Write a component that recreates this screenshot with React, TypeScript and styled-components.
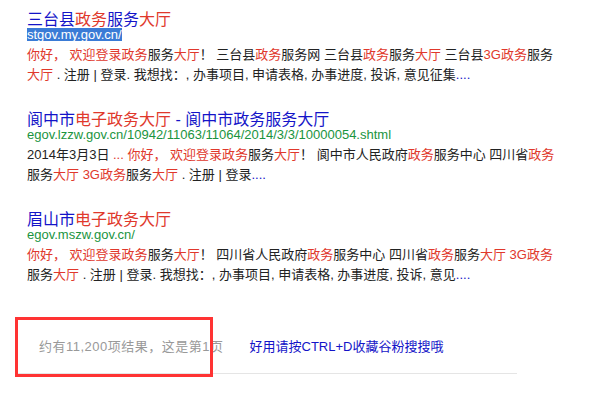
import React from 'react';
import styled, { createGlobalStyle } from 'styled-components';

type Part = [string, 'n' | 'r' | 'b'];

interface Result {
  title: Part[];
  url: string;
  selected?: boolean;
  snippet: Part[];
}

const results: Result[] = [
  {
    title: [
      ['三台县', 'b'],
      ['政务', 'r'],
      ['服务', 'b'],
      ['大厅', 'r'],
    ],
    url: 'stgov.my.gov.cn/',
    selected: true,
    snippet: [
      ['你好， 欢迎登录政务', 'r'],
      ['服务', 'n'],
      ['大厅', 'r'],
      ['！ 三台县', 'n'],
      ['政务', 'r'],
      ['服务网 三台县', 'n'],
      ['政务', 'r'],
      ['服务', 'n'],
      ['大厅', 'r'],
      [' 三台县', 'n'],
      ['3G政务', 'r'],
      ['服务', 'n'],
      ['大厅', 'r'],
      [' . 注册 | 登录. 我想找：, 办事项目, 申请表格, 办事进度, 投诉, 意见征集', 'n'],
      ['....', 'b'],
    ],
  },
  {
    title: [
      ['阆中市', 'b'],
      ['电子政务大厅', 'r'],
      [' - 阆中市政务服务大厅', 'b'],
    ],
    url: 'egov.lzzw.gov.cn/10942/11063/11064/2014/3/3/10000054.shtml',
    snippet: [
      ['2014年3月3日 ', 'n'],
      ['... 你好， 欢迎登录政务', 'r'],
      ['服务', 'n'],
      ['大厅', 'r'],
      ['！ 阆中市人民政府', 'n'],
      ['政务', 'r'],
      ['服务中心 四川省', 'n'],
      ['政务', 'r'],
      ['服务', 'n'],
      ['大厅', 'r'],
      [' 3G政务', 'r'],
      ['服务', 'n'],
      ['大厅', 'r'],
      [' . 注册 | 登录', 'n'],
      ['....', 'b'],
    ],
  },
  {
    title: [
      ['眉山市', 'b'],
      ['电子政务大厅', 'r'],
    ],
    url: 'egov.mszw.gov.cn/',
    snippet: [
      ['你好， 欢迎登录政务', 'r'],
      ['服务', 'n'],
      ['大厅', 'r'],
      ['！ 四川省人民政府', 'n'],
      ['政务', 'r'],
      ['服务中心 四川省', 'n'],
      ['政务', 'r'],
      ['服务', 'n'],
      ['大厅', 'r'],
      [' 3G政务', 'r'],
      ['服务', 'n'],
      ['大厅', 'r'],
      [' . 注册 | 登录. 我想找：, 办事项目, 申请表格, 办事进度, 投诉, 意见', 'n'],
      ['....', 'b'],
    ],
  },
];

const GlobalStyle = createGlobalStyle`
  body {
    margin: 0;
    background: #fff;
    font-family: "Liberation Sans", "Noto Sans CJK SC", sans-serif;
  }
`;

const Page = styled.div`
  width: 596px;
  height: 412px;
  overflow: hidden;
`;

const List = styled.div`
  padding: 12px 0 0 27px;
  display: flex;
  flex-direction: column;
  gap: 27px;
`;

const Item = styled.div`
  display: flex;
  flex-direction: column;
  width: 536px;
`;

const Title = styled.a`
  font-size: 16px;
  line-height: 16px;
  color: #1414c8;
  text-decoration: none;
`;

const Url = styled.div<{ $selected?: boolean }>`
  font-size: 13px;
  line-height: 13px;
  height: 13px;
  color: #1a9440;
  span {
    display: inline-block;
    height: 13px;
    line-height: 13px;
    background: ${(p) => (p.$selected ? '#3a7bd6' : 'transparent')};
    color: ${(p) => (p.$selected ? '#fff' : '#1a9440')};
  }
`;

const Snippet = styled.div`
  margin-top: 4px;
  font-size: 13px;
  line-height: 20px;
  color: #222;
`;

const Mark = styled.span<{ $kind: 'n' | 'r' | 'b' }>`
  color: ${(p) => (p.$kind === 'r' ? '#e0382c' : p.$kind === 'b' ? '#1414c8' : 'inherit')};
`;

const Footer = styled.div`
  position: relative;
  margin: 32px 0 0 15px;
  width: 502px;
  height: 57px;
  border-bottom: 1px solid #e5e5e5;
  display: flex;
  align-items: center;
  gap: 26px;
  padding: 0 0 0 24px;
  box-sizing: border-box;
  font-size: 13px;
`;

const Count = styled.span`
  color: #999;
  margin-top: 1px;
  letter-spacing: 0.5px;
`;

const Tip = styled.a`
  color: #1414c8;
  text-decoration: none;
  margin-top: 1px;
`;

// red annotation frame drawn over the result count
const Frame = styled.div`
  position: absolute;
  left: 0;
  top: 0;
  width: 198px;
  height: 60px;
  border: 3px solid #ff3333;
  box-sizing: border-box;
  pointer-events: none;
`;

const renderParts = (parts: Part[]) =>
  parts.map(([text, kind], i) => (
    <Mark key={i} $kind={kind}>
      {text}
    </Mark>
  ));

export default function App() {
  return (
    <Page>
      <GlobalStyle />
      <List>
        {results.map((r, i) => (
          <Item key={i}>
            <Title href="#">{renderParts(r.title)}</Title>
            <Url $selected={r.selected}>
              <span>{r.url}</span>
            </Url>
            <Snippet>{renderParts(r.snippet)}</Snippet>
          </Item>
        ))}
      </List>
      <Footer>
        <Count>约有11,200项结果，这是第1页</Count>
        <Tip href="#">好用请按CTRL+D收藏谷粉搜搜哦</Tip>
        <Frame />
      </Footer>
    </Page>
  );
}
